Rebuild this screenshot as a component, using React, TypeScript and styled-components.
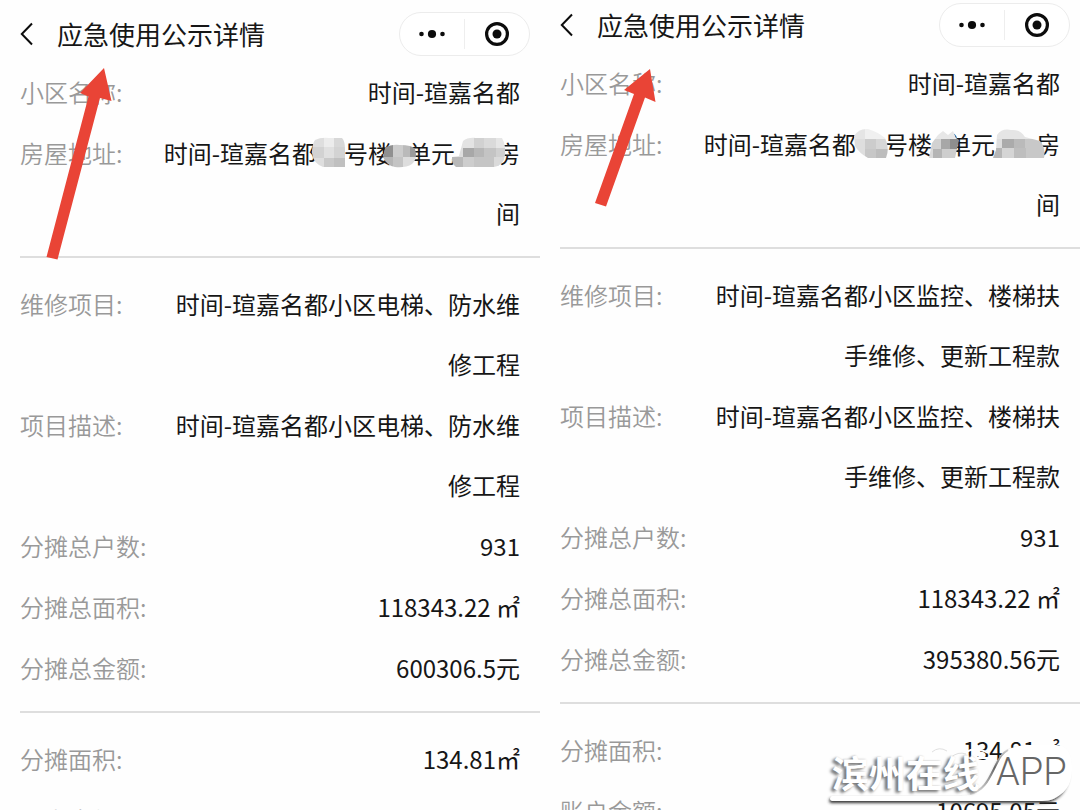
import React, { useId } from "react";
import styled, { createGlobalStyle } from "styled-components";

const GlobalStyle = createGlobalStyle`
  * { box-sizing: border-box; }
  body {
    margin: 0;
    background: #fefefe;
    color: #161616;
    font-family: "Noto Sans CJK SC", "Noto Sans", sans-serif;
  }
`;

const Page = styled.main`
  position: relative;
  display: grid;
  grid-template-columns: repeat(2, minmax(0, 1fr));
  height: 100vh;
  overflow: hidden;
`;

const Panel = styled.section`
  position: relative;
  min-width: 0;
`;

const Header = styled.header<{ $top: number }>`
  display: flex;
  align-items: center;
  padding: ${(p) => p.$top}px 10px 6px 20px;
`;

const IconButton = styled.button`
  display: flex;
  align-items: center;
  justify-content: center;
  padding: 0;
  border: 0;
  background: none;
  color: #0c0c0c;
`;

const Title = styled.h1`
  flex: 1;
  margin: 0 0 0 23px;
  font-size: 26px;
  line-height: 44px;
  font-weight: 400;
  white-space: nowrap;
`;

const Capsule = styled.div`
  display: flex;
  align-items: center;
  width: 131px;
  height: 44px;
  border: 1px solid #ececec;
  border-radius: 22px;
  background: #ffffff;
  ${IconButton} {
    flex: 1;
    height: 30px;
  }
  ${IconButton} + ${IconButton} {
    border-left: 1px solid #eeeeee;
  }
`;

const Group = styled.dl`
  display: flex;
  flex-direction: column;
  gap: 1px;
  margin: 0 0 0 20px;
  padding: 0 20px 13px 0;
  & + & {
    border-top: 2px solid #dedede;
    padding-top: 16px;
  }
`;

const Row = styled.div`
  display: flex;
  font-size: 24px;
  line-height: 60px;
`;

const Label = styled.dt`
  flex: 0 0 140px;
  color: #999999;
  font-weight: 350;
  white-space: nowrap;
`;

const Value = styled.dd`
  flex: 1;
  min-width: 0;
  margin: 0;
  text-align: right;
`;

const Slot = styled.span<{ $width: number; $overhang: number }>`
  position: relative;
  display: inline-block;
  width: ${(p) => p.$width}px;
  height: 30px;
  vertical-align: middle;
  svg {
    position: absolute;
    top: -4px;
    left: -${(p) => p.$overhang}px;
  }
`;

const Pointer = styled.svg`
  position: absolute;
  top: 0;
  left: 0;
  pointer-events: none;
`;

const Watermark = styled.div`
  position: absolute;
  right: 0;
  bottom: 0;
  width: 256px;
  height: 76px;
  pointer-events: none;
  > svg {
    position: absolute;
    inset: 0;
  }
`;

const WatermarkText = styled.div`
  position: relative;
  display: flex;
  align-items: center;
  gap: 16px;
  padding: 16px 0 0 8px;
  line-height: 44px;
  white-space: nowrap;
`;

const Brand = styled.span`
  font-size: 37px;
  font-weight: 700;
  color: #ffffff;
  text-shadow: -3px 2px 3px #777777, -1px 0 2px #bbbbbb;
`;

const BrandSuffix = styled.span`
  font-family: Roboto, "Liberation Sans", sans-serif;
  font-size: 38px;
  font-weight: 300;
  color: #666666;
`;

type Cell = [x: number, y: number, w: number, h: number, fill: string];
type MosaicShape = { slot: number; overhang: number; width: number; outline: string; cells: Cell[] };

function Mosaic({ shape }: { shape: MosaicShape }) {
  const id = useId();
  return (
    <Slot $width={shape.slot} $overhang={shape.overhang}>
      <svg width={shape.width} height="32" aria-hidden="true">
        <clipPath id={id}>
          <path d={shape.outline} />
        </clipPath>
        <g clipPath={`url(#${id})`} shapeRendering="crispEdges">
          {shape.cells.map(([x, y, w, h, fill], i) => (
            <rect key={i} x={x} y={y} width={w} height={h} fill={fill} />
          ))}
        </g>
      </svg>
    </Slot>
  );
}

const leftMasks: MosaicShape[] = [
  {
    slot: 28,
    overhang: 5,
    width: 36,
    outline: "M4 3Q10 0 18 1H31Q34 4 34 12V30H12Q2 26 1 16Q1 7 4 3Z",
    cells: [
      [0, 0, 13, 10, "#dedede"], [13, 0, 10, 10, "#ececec"], [23, 0, 13, 10, "#d8d8d8"],
      [0, 10, 13, 11, "#d2d2d2"], [13, 10, 10, 11, "#e0e0e0"], [23, 10, 13, 11, "#d3d3d3"],
      [0, 21, 13, 11, "#dedede"], [13, 21, 10, 11, "#c9c9c9"], [23, 21, 13, 11, "#c0c0c0"],
    ],
  },
  {
    slot: 15,
    overhang: 9,
    width: 34,
    outline: "M2 11Q8 7 17 8Q29 8 32 12Q35 22 29 27Q23 31 12 30Q4 29 0 20Z",
    cells: [
      [0, 0, 10, 20, "#909090"], [10, 0, 10, 20, "#cccccc"], [20, 0, 7, 20, "#bababa"], [27, 0, 8, 20, "#9b9b9b"],
      [0, 20, 10, 12, "#b5b5b5"], [10, 20, 10, 12, "#c4c4c4"], [20, 20, 15, 12, "#dddddd"],
    ],
  },
  {
    slot: 41,
    overhang: 5,
    width: 56,
    outline: "M13 4Q18 0 26 1H52Q56 8 55 18Q54 28 44 30H6Q1 26 2 20L9 19Z",
    cells: [
      [0, 0, 24, 11, "#e3e3e3"], [24, 0, 10, 11, "#d1d1d1"], [34, 0, 12, 11, "#dadada"], [46, 0, 11, 11, "#e6e6e6"],
      [0, 11, 13, 9, "#dedede"], [13, 11, 11, 9, "#a8a8a8"], [24, 11, 10, 9, "#b7b7b7"], [34, 11, 12, 9, "#c4c4c4"], [46, 11, 11, 9, "#d0d0d0"],
      [0, 20, 13, 12, "#b8b8b8"], [13, 20, 11, 12, "#cdcdcd"], [24, 20, 20, 12, "#c5c5c5"], [44, 20, 13, 12, "#dadada"],
    ],
  },
];

const rightMasks: MosaicShape[] = [
  {
    slot: 28,
    overhang: 5,
    width: 38,
    outline: "M3 8Q8 0 17 1Q27 4 34 10Q39 20 35 30H17Q8 25 4 18Z",
    cells: [
      [0, 0, 14, 11, "#e5e5e5"], [14, 0, 24, 11, "#f0f0f0"],
      [0, 11, 14, 21, "#dedede"], [14, 11, 11, 10, "#cccccc"], [25, 11, 13, 10, "#d7d7d7"],
      [14, 21, 11, 11, "#c7c7c7"], [25, 21, 13, 11, "#bdbdbd"],
    ],
  },
  {
    slot: 15,
    overhang: 4,
    width: 32,
    outline: "M10 7L15 3L20 7L25 3L28 10L31 12L27 30H1L4 15Z",
    cells: [
      [0, 0, 32, 11, "#e7e7e7"], [0, 11, 13, 10, "#d2d2d2"], [13, 11, 9, 10, "#a7a7a7"], [22, 11, 10, 10, "#8e8e8e"],
      [0, 21, 5, 11, "#dadada"], [5, 21, 9, 11, "#b5b5b5"], [14, 21, 18, 11, "#cecece"],
    ],
  },
  {
    slot: 41,
    overhang: 3,
    width: 56,
    outline: "M5 7Q10 0 19 2Q28 1 33 9L48 13Q54 20 52 30H1L4 22Z",
    cells: [
      [0, 0, 56, 11, "#e5e5e5"], [0, 11, 10, 10, "#dedede"], [10, 11, 12, 9, "#ababab"], [22, 11, 11, 9, "#bababa"], [33, 11, 23, 9, "#c8c8c8"],
      [0, 20, 10, 12, "#b6b6b6"], [10, 20, 12, 12, "#d5d5d5"], [22, 20, 12, 12, "#bebebe"], [34, 20, 22, 12, "#c8c8c8"],
    ],
  },
];

type Entry = { label: string; value: React.ReactNode };

function address(masks: MosaicShape[]) {
  return (
    <>
      时间-瑄嘉名都
      <Mosaic shape={masks[0]} />
      号楼
      <Mosaic shape={masks[1]} />
      单元
      <Mosaic shape={masks[2]} />
      房间
    </>
  );
}

const leftGroups: Entry[][] = [
  [
    { label: "小区名称:", value: "时间-瑄嘉名都" },
    { label: "房屋地址:", value: address(leftMasks) },
  ],
  [
    { label: "维修项目:", value: "时间-瑄嘉名都小区电梯、防水维修工程" },
    { label: "项目描述:", value: "时间-瑄嘉名都小区电梯、防水维修工程" },
    { label: "分摊总户数:", value: "931" },
    { label: "分摊总面积:", value: "118343.22 ㎡" },
    { label: "分摊总金额:", value: "600306.5元" },
  ],
  [
    { label: "分摊面积:", value: "134.81㎡" },
    { label: "账户金额:", value: "" },
  ],
];

const rightGroups: Entry[][] = [
  [
    { label: "小区名称:", value: "时间-瑄嘉名都" },
    { label: "房屋地址:", value: address(rightMasks) },
  ],
  [
    { label: "维修项目:", value: "时间-瑄嘉名都小区监控、楼梯扶手维修、更新工程款" },
    { label: "项目描述:", value: "时间-瑄嘉名都小区监控、楼梯扶手维修、更新工程款" },
    { label: "分摊总户数:", value: "931" },
    { label: "分摊总面积:", value: "118343.22 ㎡" },
    { label: "分摊总金额:", value: "395380.56元" },
  ],
  [
    { label: "分摊面积:", value: "134.81㎡" },
    { label: "账户金额:", value: "10695.05元" },
  ],
];

function DetailPanel({ top, groups, arrow }: { top: number; groups: Entry[][]; arrow: string }) {
  return (
    <Panel>
      <Header $top={top}>
        <IconButton type="button" aria-label="返回">
          <svg width="14" height="24" viewBox="0 0 14 24" fill="none" stroke="currentColor" strokeWidth="2">
            <path d="M12 1.5L1.8 12L12 22.5" />
          </svg>
        </IconButton>
        <Title>应急使用公示详情</Title>
        <Capsule>
          <IconButton type="button" aria-label="更多">
            <svg width="28" height="10" fill="currentColor">
              <circle cx="3.5" cy="5" r="2.3" />
              <circle cx="14" cy="5" r="4.1" />
              <circle cx="24.5" cy="5" r="2.3" />
            </svg>
          </IconButton>
          <IconButton type="button" aria-label="关闭">
            <svg width="26" height="26">
              <circle cx="13" cy="13" r="10.4" fill="none" stroke="currentColor" strokeWidth="3.2" />
              <circle cx="13" cy="13" r="4.5" fill="currentColor" />
            </svg>
          </IconButton>
        </Capsule>
      </Header>
      {groups.map((entries, i) => (
        <Group key={i}>
          {entries.map((entry) => (
            <Row key={entry.label}>
              <Label>{entry.label}</Label>
              <Value>{entry.value}</Value>
            </Row>
          ))}
        </Group>
      ))}
      <Pointer width="130" height="270" aria-hidden="true">
        <path d={arrow} fill="#e94436" />
      </Pointer>
    </Panel>
  );
}

export default function App() {
  return (
    <>
      <GlobalStyle />
      <Page>
        <DetailPanel
          top={12}
          groups={leftGroups}
          arrow="M104 68L80 93L88.5 96.5L46.5 257L57.5 259.5L100 98L111.5 101Z"
        />
        <DetailPanel
          top={3}
          groups={rightGroups}
          arrow="M110 69L84 90L94 94L55 203L66 206.5L105 97.5L115.5 102Z"
        />
        <Watermark>
          <svg width="256" height="76" aria-hidden="true">
            <defs>
              <filter id="soft" x="-10%" y="-20%" width="120%" height="150%">
                <feDropShadow dx="-1" dy="2" stdDeviation="1.4" floodColor="#333333" floodOpacity="1" />
              </filter>
              <linearGradient id="fade" x1="0" x2="0" y1="1" y2="0">
                <stop offset="0" stopColor="#dddddd" />
                <stop offset="0.6" stopColor="#666666" />
                <stop offset="1" stopColor="#cccccc" />
              </linearGradient>
            </defs>
            <path d="M142 24H166M142 18Q152 12 164 19" fill="none" stroke="#ffffff" strokeWidth="2" />
            <path
              d="M8 62H138C162 62 166 44 174 28C180 16 190 12 205 12H232C243 12 246 22 246 34C246 54 236 67 218 67H8Q4 65 8 62Z"
              fill="#ffffff"
              filter="url(#soft)"
            />
            <path
              d="M174 28C180 16 190 11 205 11H232C244 11 248 22 248 34C248 52 240 62 226 64L60 62H138C162 62 166 44 174 28Z"
              fill="#ffffff"
            />
            <path d="M146 60C162 56 166 42 173 29Q177 20 184 16" fill="none" stroke="url(#fade)" strokeWidth="2" />
            <path d="M108 18Q115 12 123 17M126 24Q134 17 142 20" fill="none" stroke="#e0e0e0" strokeWidth="1" />
          </svg>
          <WatermarkText>
            <Brand>滨州在线</Brand>
            <BrandSuffix>APP</BrandSuffix>
          </WatermarkText>
        </Watermark>
      </Page>
    </>
  );
}
